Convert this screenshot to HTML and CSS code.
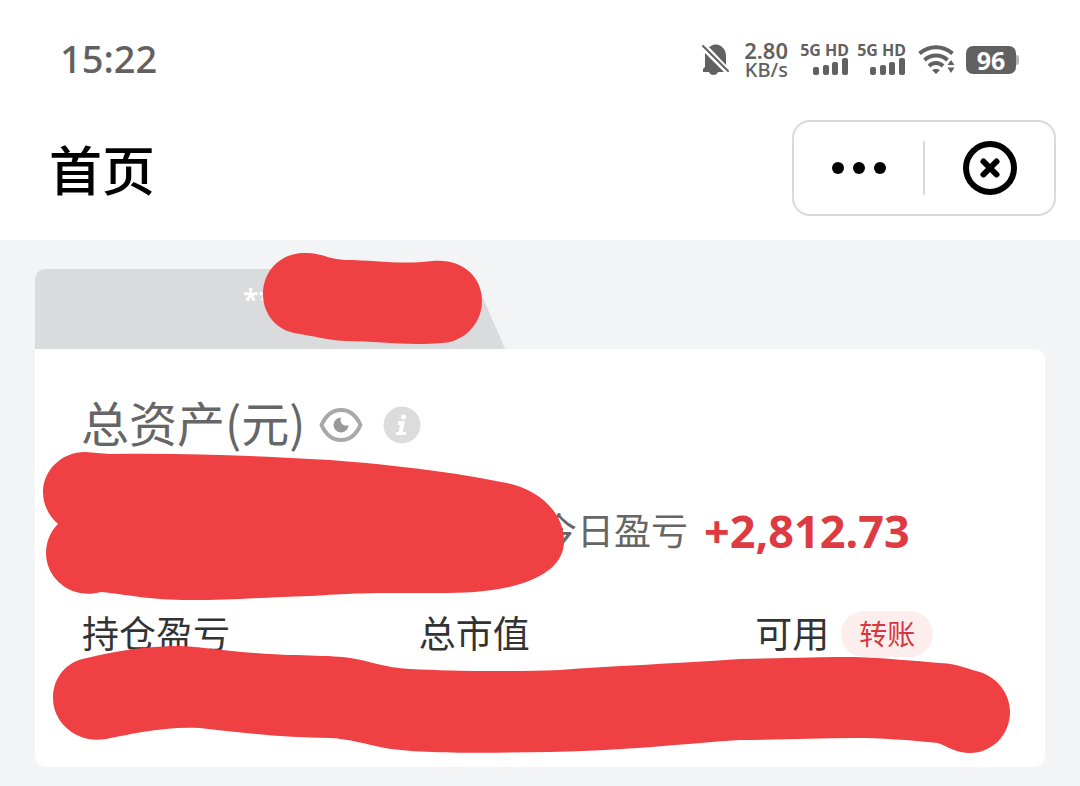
FILE: index.html
```html
<!DOCTYPE html>
<html lang="zh-CN">
<head>
<meta charset="utf-8">
<meta name="viewport" content="width=device-width, initial-scale=1">
<title>首页</title>
<link rel="stylesheet" href="styles.css">
</head>
<body>
<header class="top">
  <div class="status">
    <time class="clock">15:22</time>
    <div class="indicators">
      <svg class="bell" width="30" height="34" viewBox="0 0 30 34" aria-hidden="true">
        <path fill="#616161" d="M4 10L23 29H17C16 33 9 33 8 29H2V26L4 24V14Z"/>
        <path fill="#616161" d="M8 4L12 2C18 0 25 5 25 13V22Z"/>
        <path stroke="#616161" stroke-width="2" stroke-linecap="round" d="M2 3L27 28"/>
      </svg>
      <div class="speed"><span>2.80</span><span>KB/s</span></div>
      <div class="signal"><span>5G HD</span>
        <svg width="36" height="18" viewBox="0 0 36 18" fill="#616161" aria-hidden="true"><rect x="0" y="9" width="6" height="8" rx="2"/><rect x="10" y="7" width="6" height="10" rx="2"/><rect x="19" y="4" width="6" height="13" rx="2"/><rect x="29" y="0" width="6" height="17" rx="2"/></svg>
      </div>
      <div class="signal"><span>5G HD</span>
        <svg width="36" height="18" viewBox="0 0 36 18" fill="#616161" aria-hidden="true"><rect x="0" y="9" width="6" height="8" rx="2"/><rect x="10" y="7" width="6" height="10" rx="2"/><rect x="19" y="4" width="6" height="13" rx="2"/><rect x="29" y="0" width="6" height="17" rx="2"/></svg>
      </div>
      <svg class="wifi" width="38" height="32" viewBox="0 0 38 32" aria-hidden="true">
        <g fill="none" stroke="#616161" stroke-width="4"><path d="M1.500 9.500C11 1 25 1 34.500 9.500"/><path d="M6.500 16C13 10 23 10 29.500 16"/><path d="M11 22C15 18 21 18 25 22"/></g>
        <path fill="#616161" d="M14 26C16 24.500 20 24.500 22 26L18 30ZM33 16L36.500 21H29.500ZM33 29L36.500 23.500H29.500Z"/>
      </svg>
      <div class="battery"><span>96</span></div>
    </div>
  </div>
  <nav class="nav">
    <h1>首页</h1>
    <div class="capsule">
      <button type="button" aria-label="更多"><svg width="56" height="14" viewBox="0 0 56 14" aria-hidden="true"><circle cx="7" cy="7" r="6"/><circle cx="28" cy="7" r="6"/><circle cx="49" cy="7" r="6"/></svg></button>
      <i class="divider"></i>
      <button type="button" aria-label="关闭"><svg width="54" height="54" viewBox="0 0 54 54" fill="none" stroke="#000" aria-hidden="true"><circle cx="27" cy="27" r="24" stroke-width="6"/><path stroke-width="6" stroke-linecap="round" d="M20.500 20.500L33.500 33.500M33.500 20.500L20.500 33.500"/></svg></button>
    </div>
  </nav>
</header>
<main class="account">
  <div class="tab"><span>**</span></div>
  <section class="card">
    <div class="total">
      <h2>总资产(元)</h2>
      <button type="button" class="eye" aria-label="隐藏金额"><svg width="44" height="36" viewBox="0 0 44 36" aria-hidden="true"><path fill="none" stroke="#a8a8a8" stroke-width="4" stroke-linejoin="round" d="M2.500 18C7 8 14 3 22 3S37 8 41.500 18C37 28 30 33 22 33S7 28 2.500 18Z"/><path fill="#999" d="M22 10.500A7.500 7.500 0 1 0 29.500 18C26 20 20 17 22 10.500Z"/></svg></button>
      <button type="button" class="info" aria-label="说明"><svg width="38" height="38" viewBox="0 0 38 38" aria-hidden="true"><circle cx="19" cy="19" r="18.500" fill="#dcdcdc"/><circle cx="20.500" cy="11" r="2.500" fill="#fff"/><path fill="none" stroke="#fff" stroke-width="4" d="M15 17H19.500L17.500 27"/><path stroke="#fff" stroke-width="3" d="M13 27.500H23"/></svg></button>
    </div>
    <div class="today"><div class="today-value"><span>今日盈亏</span><strong>+2,812.73</strong></div></div>
    <div class="metrics">
      <div>持仓盈亏</div>
      <div>总市值</div>
      <div>可用<button type="button" class="transfer">转账</button></div>
    </div>
  </section>
  <svg class="masks" viewBox="0 240 1080 546" aria-hidden="true">
    <path d="M303 253C321 252 326 259 345 260C375 260 400 265 432 261C462 258 482 276 482 301C482 325 462 343 441 343C405 346 380 341 345 341C325 340 315 336 294 333C276 329 263 314 263 294C263 272 279 254 303 253Z"/>
    <path d="M85 452L110 454C180 453 240 455 310 459C360 461 450 471 501 482C535 487 564 510 564 541C564 565 542 577 520 584C495 592 465 593 440 593C390 593 365 592 310 596C270 597 235 600 190 600C150 600 130 595 101 592C73 600 46 580 46 553C46 542 50 532 58 524C49 516 43 505 43 492C43 470 62 452 85 452Z"/>
    <path d="M53 698C53 677 67 661 87 658C115 651 145 646 180 646C205 647 225 651 255 653C290 656 335 655 350 658C370 661 385 668 410 669C450 671 500 672 560 670C610 666 670 664 740 659C780 658 820 657 855 657C885 658 915 661 940 663C960 664 970 670 980 672C998 678 1010 694 1010 712C1010 735 992 753 970 753C957 753 948 747 938 743C910 740 880 738 855 738C815 738 775 740 740 740C680 744 620 751 550 752C490 753 420 754 385 748C365 744 350 739 330 738C285 738 235 732 200 728C165 726 130 734 106 739C78 744 53 724 53 698Z"/>
  </svg>
</main>
</body>
</html>
```
FILE: styles.css
```css
* { box-sizing: border-box; }

body {
  margin: 0;
  background: #f3f4f6;
  color: #333;
  font-family: "Noto Sans", "Noto Sans CJK SC", sans-serif;
}

h1, h2 { margin: 0; font-family: "Noto Sans CJK SC", sans-serif; }

button {
  display: flex;
  align-items: center;
  justify-content: center;
  padding: 0;
  border: 0;
  background: none;
  font-family: inherit;
}

.top { background: #fff; padding-bottom: 24px; }

.status {
  display: flex;
  align-items: center;
  justify-content: space-between;
  height: 120px;
  padding: 0 60px;
  color: #616161;
}

.clock { padding-bottom: 4px; font-size: 38px; font-weight: 500; line-height: 40px; }

.indicators { display: flex; align-items: center; }

.bell { margin-right: 9px; }

.speed {
  display: flex;
  flex-direction: column;
  align-items: flex-end;
  width: 48px;
  margin-right: 12px;
  font-size: 22px;
  font-weight: 600;
  line-height: 20px;
}

.speed span + span { font-size: 20px; font-weight: 500; }

.signal {
  display: flex;
  flex-direction: column;
  align-items: flex-end;
  width: 49px;
  margin-right: 8px;
  padding-bottom: 2px;
  font-size: 16px;
  font-weight: 700;
  line-height: 16px;
  white-space: nowrap;
}

.wifi { margin: 0 10px 0 4px; }

.battery {
  position: relative;
  display: grid;
  place-items: center;
  width: 50px;
  height: 28px;
  margin-right: 4px;
  border-radius: 7px;
  background: #616161;
  color: #fff;
  font-size: 25px;
  font-weight: 700;
  line-height: 28px;
}

.battery::after {
  content: "";
  position: absolute;
  left: 100%;
  top: 9px;
  width: 3px;
  height: 10px;
  border-radius: 0 3px 3px 0;
  background: #b5b5b5;
}

.nav {
  display: flex;
  align-items: center;
  justify-content: space-between;
  padding: 0 24px 0 49px;
}

.nav h1 { color: #000; font-size: 53px; font-weight: 500; line-height: 96px; }

.capsule {
  display: flex;
  align-items: center;
  width: 264px;
  height: 96px;
  border: 2px solid #dadada;
  border-radius: 18px;
}

.capsule button { flex: 1; height: 92px; }

.divider { width: 2px; height: 54px; background: #dadada; }

.account { position: relative; padding: 29px 35px 19px; }

.tab {
  width: 470px;
  height: 80px;
  padding-left: 208px;
  border-radius: 10px 0 0 0;
  background: #dadbdd;
  clip-path: polygon(0 0, 426px 0, 434px 6px, 446px 24px, 470px 80px, 0 80px);
  color: #fff;
  font-size: 28px;
  font-weight: 600;
  line-height: 60px;
}

.card {
  padding: 48px 0 110px;
  border-radius: 0 10px 10px 10px;
  background: #fff;
}

.total { display: flex; align-items: center; height: 56px; padding-left: 46px; }

.total h2 { padding-bottom: 8px; color: #666; font-size: 48px; font-weight: 400; line-height: 56px; }

.eye { margin-left: 14px; }

.info { margin-left: 20px; }

.today {
  display: grid;
  grid-template-columns: 1fr 1fr;
  margin: 48px 0 50px;
  color: #666;
  font-size: 37px;
  line-height: 60px;
}

.today-value {
  grid-column: 2;
  display: flex;
  align-items: center;
  gap: 16px;
  white-space: nowrap;
}

.today strong { color: #dd3b41; font-size: 45px; font-weight: 700; }

.metrics { display: grid; grid-template-columns: repeat(3, 1fr); }

.metrics > div {
  display: flex;
  align-items: center;
  padding-left: 47px;
  font-size: 37px;
  line-height: 46px;
}

.transfer {
  width: 92px;
  height: 46px;
  margin-left: 12px;
  padding-bottom: 2px;
  border-radius: 23px;
  background: #fdeeee;
  color: #d5383e;
  font-size: 28px;
}

.masks {
  position: absolute;
  top: 0;
  left: 0;
  width: 100%;
  fill: #ef4143;
  pointer-events: none;
}
```
